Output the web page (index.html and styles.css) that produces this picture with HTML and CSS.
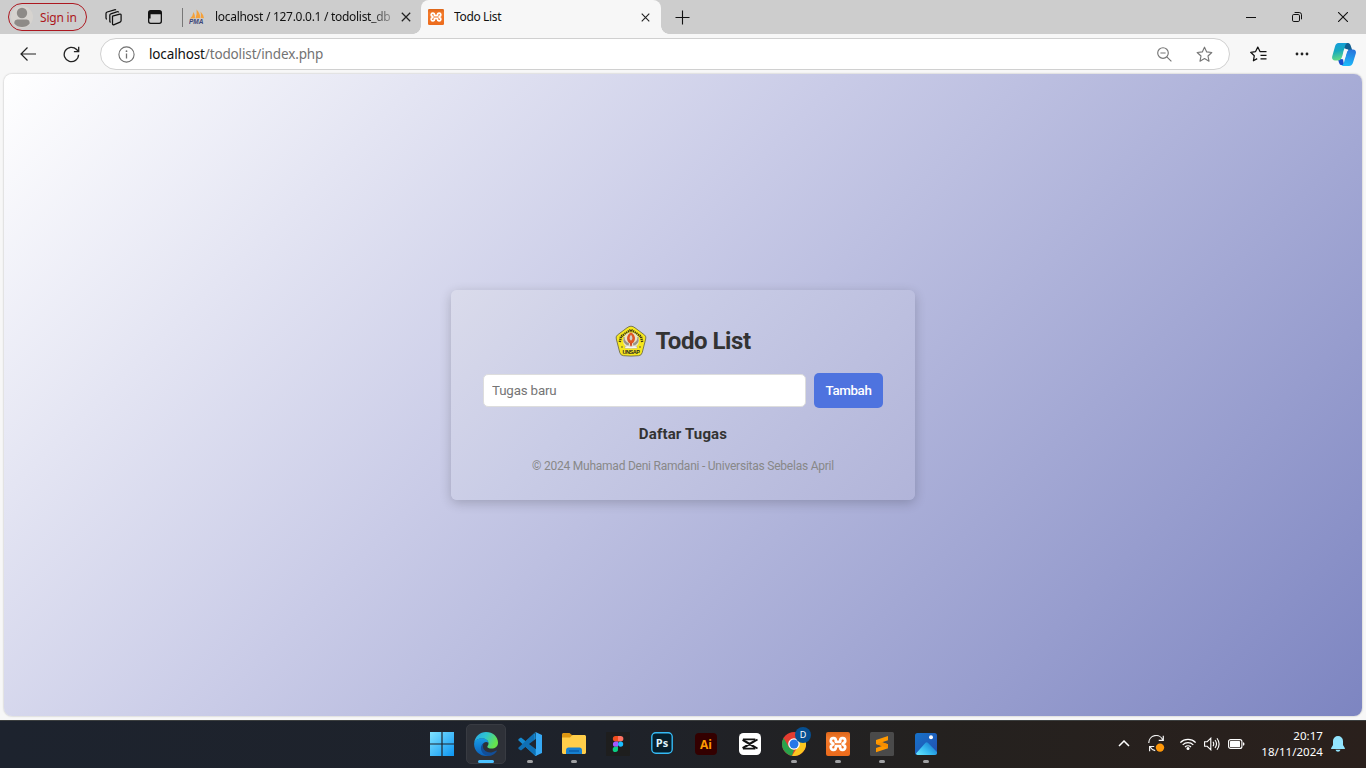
FILE: index.html
```html
<!DOCTYPE html>
<html lang="id">
<head>
<meta charset="utf-8">
<title>Todo List</title>
<link rel="stylesheet" href="styles.css">
</head>
<body>
<svg class="defs" width="0" height="0">
  <defs>
    <linearGradient id="orange" x1="0" y1="0" x2="0" y2="1"><stop offset="0" stop-color="#dc6519"/><stop offset=".25" stop-color="#f37a2b"/><stop offset="1" stop-color="#ec6b1c"/></linearGradient>
    <symbol id="xampp" viewBox="0 0 24 24">
      <rect width="24" height="24" rx="2" fill="url(#orange)"/>
      <path d="M9.800 9.800V8.600A2.500 2.500 0 1 0 6.600 11L7.400 12L6.600 13A2.500 2.500 0 1 0 9.800 15.400V14.200H14.200V15.400A2.500 2.500 0 1 0 17.400 13L16.600 12L17.400 11A2.500 2.500 0 1 0 14.200 8.600V9.800Z" fill="none" stroke="#fff" stroke-width="2.700" stroke-linejoin="round"/>
    </symbol>
    <symbol id="close" viewBox="0 0 10 10"><path d="M.8.8l8.4 8.4M9.2.8L.8 9.2" fill="none" stroke="#222" stroke-width="1.25"/></symbol>
  </defs>
</svg>

<header class="tabstrip">
  <div class="signin">
    <svg width="22" height="22" viewBox="0 0 22 22"><circle cx="11" cy="11" r="11" fill="#d6d3cf"/><circle cx="11" cy="7" r="5.2" fill="#8d8a87"/><path d="M3.300 17.500c0-3.200 1.700-4 3.700-4h8c2 0 3.700.8 3.700 4C17 20 14 21 11 21s-6-1-7.700-3.500z" fill="#8d8a87"/></svg>
    <span>Sign in</span>
  </div>
  <svg class="workspaces" width="17" height="17" viewBox="0 0 17 17" fill="none" stroke="#111" stroke-width="1.25" stroke-linejoin="round"><path d="M7.500 7.200l7.300-2.100c.9-.2 1.300.1 1.300.9v5.600c0 .8-.2 1.200-1 1.500l-5.900 2.500c-1 .4-1.700 0-1.700-.9zM13.500 3.400c0-.7-.5-.9-1-.7L5.800 4.800c-.7.2-1 .7-1 1.400v6.200c0 .6.300.8 1 .8M10.800 1.200C10.600.7 10.200.6 9.500.8L2.200 3C1.400 3.300 1 3.700 1 4.500V9c0 .7.300 1.100 1 1.100"/></svg>
  <svg class="tabmenu" width="14" height="14" viewBox="0 0 14 14"><rect x=".65" y=".65" width="12.7" height="12.7" rx="2" fill="none" stroke="#111" stroke-width="1.3"/><path d="M1 1h12v3.200H1zM1 4h1.600v4.500H1z" fill="#111"/></svg>
  <div class="tab tab-idle">
    <svg class="favicon" width="16" height="16" viewBox="0 0 16 16"><path d="M1 9.500Q4 7 4.500 3Q6.300 6 6 9.300zM6.500 9.200Q8.200 5 7.600.5Q11.500 5 11.200 9zM11.800 9Q12.300 5 11.500 2.500Q14.800 6 15 9.200z" fill="#f5a13a"/><text x="0" y="15" class="pma">PMA</text></svg>
    <span class="tab-title fade">localhost / 127.0.0.1 / todolist_db</span>
    <svg class="x" width="10" height="10"><use href="#close"/></svg>
  </div>
  <div class="tab tab-active">
    <svg class="favicon" width="16" height="16"><use href="#xampp"/></svg>
    <span class="tab-title">Todo List</span>
    <svg class="x" width="9" height="9"><use href="#close"/></svg>
  </div>
  <svg class="plus" width="15" height="15" viewBox="0 0 15 15"><path d="M7.5.5v14M.5 7.500h14" stroke="#111" stroke-width="1.100"/></svg>
  <div class="winbtns">
    <svg width="10" height="10" viewBox="0 0 10 10"><path d="M0 5.500h10" stroke="#111"/></svg>
    <svg width="10" height="10" viewBox="0 0 10 10" fill="none" stroke="#111"><rect x=".5" y="2.500" width="7" height="7" rx="1.300"/><path d="M2.600.5h4.600A2.300 2.300 0 0 1 9.500 2.800v4.500"/></svg>
    <svg width="10" height="10" viewBox="0 0 10 10"><path d="M0 0l10 10M10 0L0 10" stroke="#111" stroke-width="1.100"/></svg>
  </div>
</header>

<div class="toolbar">
  <svg class="back" width="16" height="14" viewBox="0 0 16 14" fill="none" stroke="#222" stroke-width="1.200"><path d="M16 7H1M7.500.5L1 7l6.500 6.500"/></svg>
  <svg class="reload" width="17" height="17" viewBox="0 0 17 17" fill="none" stroke="#222" stroke-width="1.300"><path d="M15.600 8.800a7.200 7.200 0 1 1-2-5.300l2 2M15.700.8v4.800h-4.800"/></svg>
  <div class="urlbar">
    <svg class="info" width="17" height="17" viewBox="0 0 17 17"><circle cx="8.500" cy="8.500" r="7.600" fill="none" stroke="#707070" stroke-width="1.100"/><path d="M8.500 7.500v5" stroke="#707070" stroke-width="1.300"/><circle cx="8.500" cy="5.200" r=".9" fill="#707070"/></svg>
    <span class="url"><b>localhost</b>/todolist/index.php</span>
    <svg class="lens" width="15" height="15" viewBox="0 0 15 15" fill="none" stroke="#777" stroke-width="1.150"><circle cx="6" cy="6" r="5.300"/><path d="M3.400 6h5.200M9.800 9.800l4.600 4.600"/></svg>
    <svg width="17" height="17" viewBox="0 0 17 17"><path d="M8.500 1.200l2.200 4.700 5.100.6-3.800 3.500 1 5.200-4.500-2.600L4 15.200 5 10 1.200 6.500l5.100-.6z" fill="none" stroke="#777" stroke-width="1.150" stroke-linejoin="round"/></svg>
  </div>
  <svg class="favs" width="17" height="17" viewBox="0 0 17 17" fill="none" stroke="#111" stroke-width="1.250"><path d="M10.800 5.700L10 5.600 7.800 1.100 5.600 5.600l-4.900.7 3.600 3.400-.9 5.100 3.800-2.200M10 5.600h6.500M10.500 9.300h6M10.500 12.800h6" stroke-linejoin="round"/></svg>
  <svg class="dots" width="14" height="4" viewBox="0 0 14 4" fill="#222"><circle cx="2" cy="2" r="1.400"/><circle cx="7" cy="2" r="1.400"/><circle cx="12" cy="2" r="1.400"/></svg>
  <svg class="copilot" width="24" height="23" viewBox="0 0 24 23">
    <defs><linearGradient id="cp1" x1="0" y1="0" x2=".2" y2="1"><stop offset="0" stop-color="#149be0"/><stop offset=".5" stop-color="#17a9be"/><stop offset="1" stop-color="#62d986"/></linearGradient><linearGradient id="cp2" x1=".5" y1="0" x2=".3" y2="1"><stop offset="0" stop-color="#2876dc"/><stop offset="1" stop-color="#1bbcfb"/></linearGradient></defs>
    <path d="M12 0h4c1.600 0 2.300 1.400 2.800 3l1.400 4h-4L12 5z" fill="#125f91"/><path d="M6 16h5l1 6H9.500c-2 0-2.500-1.700-3.500-6z" fill="#164fce"/>
    <path d="M6.500 0h8.800c-1.700.8-2 2.200-2.500 4l-2.500 9c-.7 2.700-1.800 4.500-4.500 4.500H3C.8 17.500-.3 16 .2 13.500L3 3.500C3.600 1.200 4.700 0 6.500 0z" fill="url(#cp1)"/>
    <path d="M19 6.500h2c2.300 0 3.400 1.800 2.800 4l-2.600 8.500c-.7 2.500-2 4-4.200 4H9c2-.6 2.600-2 3.100-4L14.600 10c.7-2.400 1.800-3.500 4.400-3.500z" fill="url(#cp2)"/>
    <path d="M12 6.500h4.500c-1.200.8-1.700 2-2.100 3.500l-1.200 4c-.5 1.700-1.400 2.300-3.700 2.300.8-.9 1.100-1.800 1.400-3z" fill="#f7f7f7"/>
  </svg>
</div>

<main class="page">
  <section class="card">
    <h1 class="heading">
      <svg width="32" height="32" viewBox="0 0 32 32">
        <path d="M16 1.200Q18 1.200 20 2.800L29.600 10Q31.500 11.700 30.700 14L27.200 27.700Q26.500 30.500 23.500 30.700Q16 31.500 8.500 30.700Q5.600 30.500 4.800 27.700L1.300 14Q.5 11.700 2.400 10L12 2.800Q14 1.200 16 1.200z" fill="#f6e71e" stroke="#706d48" stroke-width=".9"/>
        <path d="M4.800 17L6 11.500L16 4.800L26 11.500L27.200 17" fill="none" stroke="#3d3a16" stroke-width="2.400" stroke-dasharray="1.300 .7" stroke-linejoin="round"/>
        <circle cx="16" cy="15.400" r="8" fill="#e9e4c9"/>
        <path d="M9 12q-.5 5 5 7M23 12q.5 5-5 7M8.700 15q1 4 5 5M23.300 15q-1 4-5 5" fill="none" stroke="#98938b" stroke-width="1.200"/>
        <path d="M16 7.200c5 3 4.800 7.700 2 10.800h-4c-2.800-3-3-7.800 2-10.800z" fill="#df5623"/><path d="M16 9.600c2 2.600 1.800 5 0 6.200-1.800-1.200-2-3.600 0-6.200z" fill="#cbd1cf"/><path d="M14.800 18h2.400l-.5 3h-1.400z" fill="#cc4a28"/>
        <path d="M10 21.500q3-1.500 6 .2 3-1.700 6-.2v1.800H10z" fill="#fff" stroke="#98938b" stroke-width=".4"/>
        <text x="16" y="28.600" class="crest">UNSAP</text><circle cx="7" cy="22" r=".8" fill="#444"/><circle cx="25" cy="22" r=".8" fill="#444"/>
      </svg>
      <span>Todo List</span>
    </h1>
    <form class="form"><input class="task" type="text" placeholder="Tugas baru"><button class="add" type="button">Tambah</button></form>
    <h2 class="subhead">Daftar Tugas</h2>
    <p class="copy">© 2024 Muhamad Deni Ramdani - Universitas Sebelas April</p>
  </section>
</main>

<footer class="taskbar">
  <div class="apps">
    <div class="app"><svg width="24" height="24" viewBox="0 0 24 24"><defs><linearGradient id="win" x1="0" y1="0" x2="1" y2="1"><stop offset="0" stop-color="#7fe3ff"/><stop offset="1" stop-color="#0c95f2"/></linearGradient></defs><path d="M0 0h11.400v11.400H0zM12.600 0H24v11.400H12.600zM0 12.600h11.400V24H0zM12.600 12.600H24V24H12.600z" fill="url(#win)"/></svg></div>
    <div class="app current running"><svg width="24" height="24" viewBox="0 0 24 24"><defs><linearGradient id="e1" x1="0" y1="0" x2="1" y2=".4"><stop offset="0" stop-color="#2aa4e8"/><stop offset=".5" stop-color="#2ec5d0"/><stop offset="1" stop-color="#66e34c"/></linearGradient><linearGradient id="e2" x1="0" y1="0" x2="0" y2="1"><stop offset="0" stop-color="#189ce6"/><stop offset="1" stop-color="#0b5fb9"/></linearGradient></defs><path d="M.2 11C1 4.200 6 0 12 0c7 0 12 4.800 12 10.500 0 4-3 6-6.400 6-2.700 0-4.300-.9-4.300-1.800 0-.7 1.200-1.200 1.200-3.200 0-3-3-5-6.500-5C4 6.500 1 8.500.2 11z" fill="url(#e1)"/><path d="M.2 11C1 7.900 4.200 6.300 8 6.300c3.600 0 6.400 2.200 6.500 4.800-1.200-1.200-3-1.300-4.500-.3-4 2.800-1.700 11 4.800 12.900C7 25.300-.8 19 .2 11z" fill="url(#e2)"/><path d="M9.800 11c-3 6 2.400 10 7.700 9.400 2-.2 3.700-1.200 4.700-1.800.5-.2.8.2.5.6-1.900 3-5.100 4.700-8.200 4.700-6 0-10.800-8.700-4.700-12.900z" fill="#124e98"/></svg></div>
    <div class="app running"><svg width="24" height="24" viewBox="0 0 24 24"><path d="M17.500.5L7.800 9.300 3 5.600.5 7l-.2 1.200L16 22.800l2.500 1.200z" fill="#168bd1"/><path d="M17.500 23.500L7.800 14.700 3 18.400.5 17l-.2-1.200L16 1.200z" fill="#0f70b5"/><path d="M17.500 0L24 3v18l-6.500 3c-.5.2-1 0-1.500-.5 1 .5 2-.1 2-1V1.500c0-1-1-1.500-2-1 .5-.5 1-.7 1.500-.5z" fill="#36a9f4"/><path d="M18 6.800V17.200L11 12z" fill="#202630"/></svg></div>
    <div class="app running"><svg width="24" height="24" viewBox="0 0 24 24"><path d="M0 2.500C0 1.700.7 1 1.500 1h6l3 2.500V6H0z" fill="#dd9712"/><path d="M0 5.500h8L10.500 3H22.500c.8 0 1.500.7 1.500 1.500v16c0 .8-.7 1.500-1.500 1.500h-21C.7 22 0 21.300 0 20.500z" fill="#ffce4a"/><path d="M4 22v-3.500C4 16.600 5 15.500 6.500 15.500h11c1.500 0 2.500 1.100 2.500 3V22z" fill="#1680d0"/><path d="M7 19h10" stroke="#0a5eac" stroke-width="1.500"/></svg></div>
    <div class="app"><svg width="24" height="24" viewBox="0 0 24 24"><rect width="24" height="24" rx="1" fill="#1e1e1e"/><path d="M12 4v5.500H9.600a2.700 2.700 0 0 1 0-5.500z" fill="#f24e1e"/><path d="M12 4h2.600a2.700 2.700 0 0 1 0 5.500H12z" fill="#ff7262"/><path d="M12 9.500v5.300H9.600a2.650 2.650 0 0 1 0-5.300z" fill="#a259ff"/><circle cx="14.600" cy="12.100" r="2.600" fill="#1abcfe"/><path d="M12 14.800v2.500a2.650 2.650 0 1 1-2.600-2.500z" fill="#0acf83"/></svg></div>
    <div class="app"><svg class="raised" width="22" height="22" viewBox="0 0 22 22"><rect x=".8" y=".8" width="20.400" height="20.400" rx="4" fill="#061e2b" stroke="#35baf4" stroke-width="1.400"/><text x="11" y="15" class="adobe ps">Ps</text></svg></div>
    <div class="app"><svg width="22" height="22" viewBox="0 0 22 22"><rect width="22" height="22" rx="4" fill="#330000"/><text x="11" y="15.500" class="adobe ai">Ai</text></svg></div>
    <div class="app"><svg width="22" height="22" viewBox="0 0 22 22"><rect width="22" height="22" rx="4.500" fill="#fff"/><path d="M18.500 6.500L7 13.500 4.800 14.200V15.700H15.500V14.200L3.500 7M18.500 15.500L7 8.500 4.800 7.800V6.300H15.500V7.800L3.500 15" fill="none" stroke="#111" stroke-width="1.700"/></svg></div>
    <div class="app running chrome"><svg width="24" height="24" viewBox="0 0 24 24"><circle cx="12" cy="12" r="12" fill="#e33d31"/><path d="M1.600 6L7 15.200 12 18l-2 5.800A12 12 0 0 1 1.600 6z" fill="#29a34b"/><path d="M10 23.800L17.500 12 15 6.500h7.700A12 12 0 0 1 10 23.800z" fill="#fbc620"/><circle cx="12" cy="12" r="5.800" fill="#fff"/><circle cx="12" cy="12" r="4.500" fill="#2676e8"/></svg><span class="badge">D</span></div>
    <div class="app running"><svg width="24" height="24"><use href="#xampp"/></svg></div>
    <div class="app running"><svg width="24" height="24" viewBox="0 0 24 24"><rect width="24" height="24" rx="1.500" fill="#4a4a4a"/><path d="M6 8l12-4v4.200l-6 2 6 2v4L6 20.200V16l6-2-6-2z" fill="#ff9800"/><path d="M6 12l6-1.800 6 2v4L12 14z" fill="#f58d00"/></svg></div>
    <div class="app running"><svg width="22" height="22" viewBox="0 0 22 22"><defs><linearGradient id="ph" x1="0" y1="0" x2="1" y2="1"><stop offset="0" stop-color="#1672c9"/><stop offset="1" stop-color="#2450b0"/></linearGradient><linearGradient id="hill" x1="0" y1="1" x2="1" y2=".3"><stop offset="0" stop-color="#6ceafd"/><stop offset=".5" stop-color="#36baf0"/><stop offset="1" stop-color="#1778cc"/></linearGradient></defs><rect width="22" height="22" rx="2.500" fill="url(#ph)"/><path d="M1 20.500L10.300 10q1.400-1.500 2.800 0L22 19v.5Q22 22 19.500 22H3Q1.500 22 1 20.500z" fill="url(#hill)"/><circle cx="16" cy="4.200" r="2" fill="#fff"/></svg></div>
  </div>
  <div class="tray">
    <svg class="chev" width="12" height="7" viewBox="0 0 12 7" fill="none" stroke="#fff" stroke-width="1.500"><path d="M1 6l5-5 5 5"/></svg>
    <svg class="sync" width="17" height="17" viewBox="0 0 17 17" fill="none" stroke="#f2f2f2" stroke-width="1.200"><path d="M.8 8A7.300 7.300 0 0 1 14.900 5.200M15.300.8v4.600h-4.600M7.200 15.600A7.400 7.400 0 0 1 2 11.800M1.600 16.200v-4.700h4.600"/><circle cx="12" cy="12.600" r="4.200" fill="#ff9809" stroke="none"/></svg>
    <svg class="wifi" width="16" height="12" viewBox="0 0 16 12" fill="none" stroke="#fff" stroke-width="1.250"><path d="M.4 4.600a10.700 10.700 0 0 1 15.200 0M2.700 6.900a7.500 7.500 0 0 1 10.600 0M5 9a4.300 4.300 0 0 1 6 0"/><circle cx="8" cy="10.500" r="1.500" fill="#fff" stroke="none"/></svg>
    <svg class="sound" width="16" height="14" viewBox="0 0 16 14" fill="none" stroke="#fff" stroke-width="1.100"><path d="M.6 4.700h2.600L6.800 1.200v11.600L3.200 9.300H.6zM9 4.800q1.500 2.200 0 4.400M11 3q3 4 0 8M13 1.200q4.200 5.800 0 11.600"/></svg>
    <svg class="battery" width="17" height="10" viewBox="0 0 17 10"><rect x=".6" y=".6" width="13.300" height="8.800" rx="2" fill="none" stroke="#fff" stroke-width="1.150"/><rect x="2" y="2" width="10" height="6" rx=".6" fill="#fff"/><path d="M15 3.200q1.500 0 1.500 1.800T15 6.800z" fill="#fff"/></svg>
    <div class="clock"><span>20:17</span><span>18/11/2024</span></div>
    <svg class="bell" width="14" height="16" viewBox="0 0 14 16" fill="#92e4fd"><path d="M7 0a5 5 0 0 1 5 5v4l1.800 3c.3.600 0 1-.6 1H.8c-.6 0-.9-.4-.6-1L2 9V5a5 5 0 0 1 5-5zM4.500 13.800h5a2.600 2.600 0 0 1-5 0z"/></svg>
  </div>
</footer>
</body>
</html>
```
FILE: styles.css
```css
* { box-sizing: border-box; }
body { margin: 0; width: 1366px; height: 768px; overflow: hidden; display: flex; flex-direction: column; background: #f7f7f7; font-family: "Noto Sans", "Open Sans", sans-serif; }
svg { display: block; flex: none; }
.defs { position: absolute; }

.tabstrip { height: 34px; flex: none; display: flex; align-items: center; background: #cdcdcd; padding-left: 8px; }
.signin { width: 79px; height: 28px; border: 1px solid #ac1820; border-radius: 14px; display: flex; align-items: center; gap: 7px; padding-left: 2px; color: #ac1820; font-size: 12px; letter-spacing: -.2px; white-space: nowrap; }
.workspaces { margin-left: 18px; }
.tabmenu { margin-left: 26px; }
.tab { height: 34px; display: flex; align-items: center; font-size: 12px; color: #111; }
.tab-idle { width: 239px; margin-left: 20px; padding-left: 7px; background: linear-gradient(#777, #777) 0 8px / 1px 19px no-repeat; }
.tab-active { position: relative; width: 240px; padding-left: 7px; background: #f7f7f7; border-radius: 8px 8px 0 0; }
.tab-active::before, .tab-active::after { content: ""; position: absolute; bottom: 0; width: 8px; height: 8px; }
.tab-active::before { left: -8px; background: radial-gradient(circle at 0 0, #cdcdcd 7.5px, #f7f7f7 8px); }
.tab-active::after { right: -8px; background: radial-gradient(circle at 100% 0, #cdcdcd 7.5px, #f7f7f7 8px); }
.tab-title { width: 177px; margin-left: 10px; padding-bottom: 1px; white-space: nowrap; overflow: hidden; letter-spacing: -.35px; }
.fade { width: 176px; letter-spacing: -.29px; -webkit-mask-image: linear-gradient(90deg, #000 155px, rgba(0, 0, 0, .3) 176px); mask-image: linear-gradient(90deg, #000 155px, rgba(0, 0, 0, .3) 176px); }
.x { margin-left: 10px; }
.pma { font: italic bold 6.5px "Liberation Sans", sans-serif; fill: #3c4678; }
.plus { margin-left: 14px; }
.winbtns { margin-left: auto; margin-right: 18px; display: flex; gap: 36px; }

.toolbar { height: 40px; flex: none; display: flex; align-items: center; padding-left: 20px; background: #f7f7f7; }
.reload { margin-left: 27px; }
.urlbar { margin-left: 20px; width: 1130px; height: 32px; display: flex; align-items: center; background: #fff; border: 1px solid #d0d0d0; border-radius: 16px; padding: 0 16px 0 17px; }
.url { margin-left: 14px; flex: 1; padding-bottom: 1px; font-size: 13.5px; letter-spacing: -.14px; color: #737373; }
.url b { font-weight: 400; color: #111; }
.lens { margin-right: 24px; }
.favs { margin-left: 20px; }
.dots { margin-left: 28px; }
.copilot { margin-left: 23px; }

.page { margin: 0 4px 4px; height: 642px; flex: none; border-radius: 8px; display: flex; align-items: center; justify-content: center; background: linear-gradient(135deg, #fff 0%, #c9cbe7 42%, #7d85c1 100%); box-shadow: 0 0 2px rgba(0, 0, 0, .3); }
.card { width: 464px; height: 210px; padding: 32px; border-radius: 6px; background: linear-gradient(135deg, #dadbeb, #c9cce6 37%, #b1b4d9); box-shadow: 0 3px 12px rgba(0, 0, 0, .2); font-family: Roboto, sans-serif; text-align: center; color: #333; }
.heading { margin: 1px 0 0; height: 36px; display: flex; align-items: center; justify-content: center; gap: 8px; font-size: 24px; line-height: 35px; font-weight: 700; letter-spacing: -.45px; }
.form { display: flex; align-items: center; gap: 8px; margin-top: 14px; }
.task { width: 323px; height: 33px; border: 1px solid #ddd; border-radius: 5px; padding: 0 8px; background: #fff; font: 13.33px Roboto, sans-serif; letter-spacing: -.17px; }
.task::placeholder { color: #757575; }
.add { width: 69px; height: 35px; padding: 0; border: 0; border-radius: 5px; background: #4e73df; color: #fff; font: 500 13.33px Roboto, sans-serif; letter-spacing: -.35px; }
.subhead { margin: 17px 0 0; font-size: 15px; line-height: 18px; font-weight: 700; letter-spacing: .15px; }
.copy { margin: 16px 0 0; font-size: 12px; line-height: 14px; letter-spacing: -.23px; color: #888; }
.crest { font: bold 5.5px "Liberation Sans", sans-serif; text-anchor: middle; fill: #222; }

.taskbar { height: 48px; flex: none; display: flex; align-items: center; padding: 0 0 2px 420px; border-top: 1px solid #3c3f3f; background: linear-gradient(90deg, #1d232e, #1e222a 45%, #24211f 68%, #2a201c); }
.apps { display: flex; }
.app { position: relative; width: 44px; height: 40px; display: flex; align-items: center; justify-content: center; }
.app svg { position: relative; z-index: 1; }
.app .raised { margin-bottom: 2px; }
.current::before { content: ""; position: absolute; inset: 0 2px; border: 1px solid #383b42; border-radius: 5px; background: #2e3138; }
.running::after { content: ""; position: absolute; left: 19px; bottom: 1px; width: 6px; height: 3px; border-radius: 2px; background: #a0a1a3; }
.current::after { left: 14px; width: 16px; background: #4cc2ff; }
.adobe { font: bold 12px "Open Sans", sans-serif; text-anchor: middle; }
.ps { fill: #dff3fb; font-size: 11px; }
.ai { fill: #ff9a00; }
.badge { position: absolute; z-index: 2; left: 23px; top: 3px; width: 16px; height: 16px; border-radius: 50%; background: #064f91; color: #fff; font-size: 9px; line-height: 16px; text-align: center; }
.tray { margin-left: auto; margin-right: 21px; display: flex; align-items: center; }
.sync { margin-left: 18px; }
.wifi { margin-left: 15px; }
.sound { margin-left: 8px; }
.battery { margin-left: 8px; }
.clock { width: 78px; display: flex; flex-direction: column; text-align: right; color: #fff; font-size: 11.5px; line-height: 16px; letter-spacing: .05px; }
.bell { margin-left: 8px; }
```
